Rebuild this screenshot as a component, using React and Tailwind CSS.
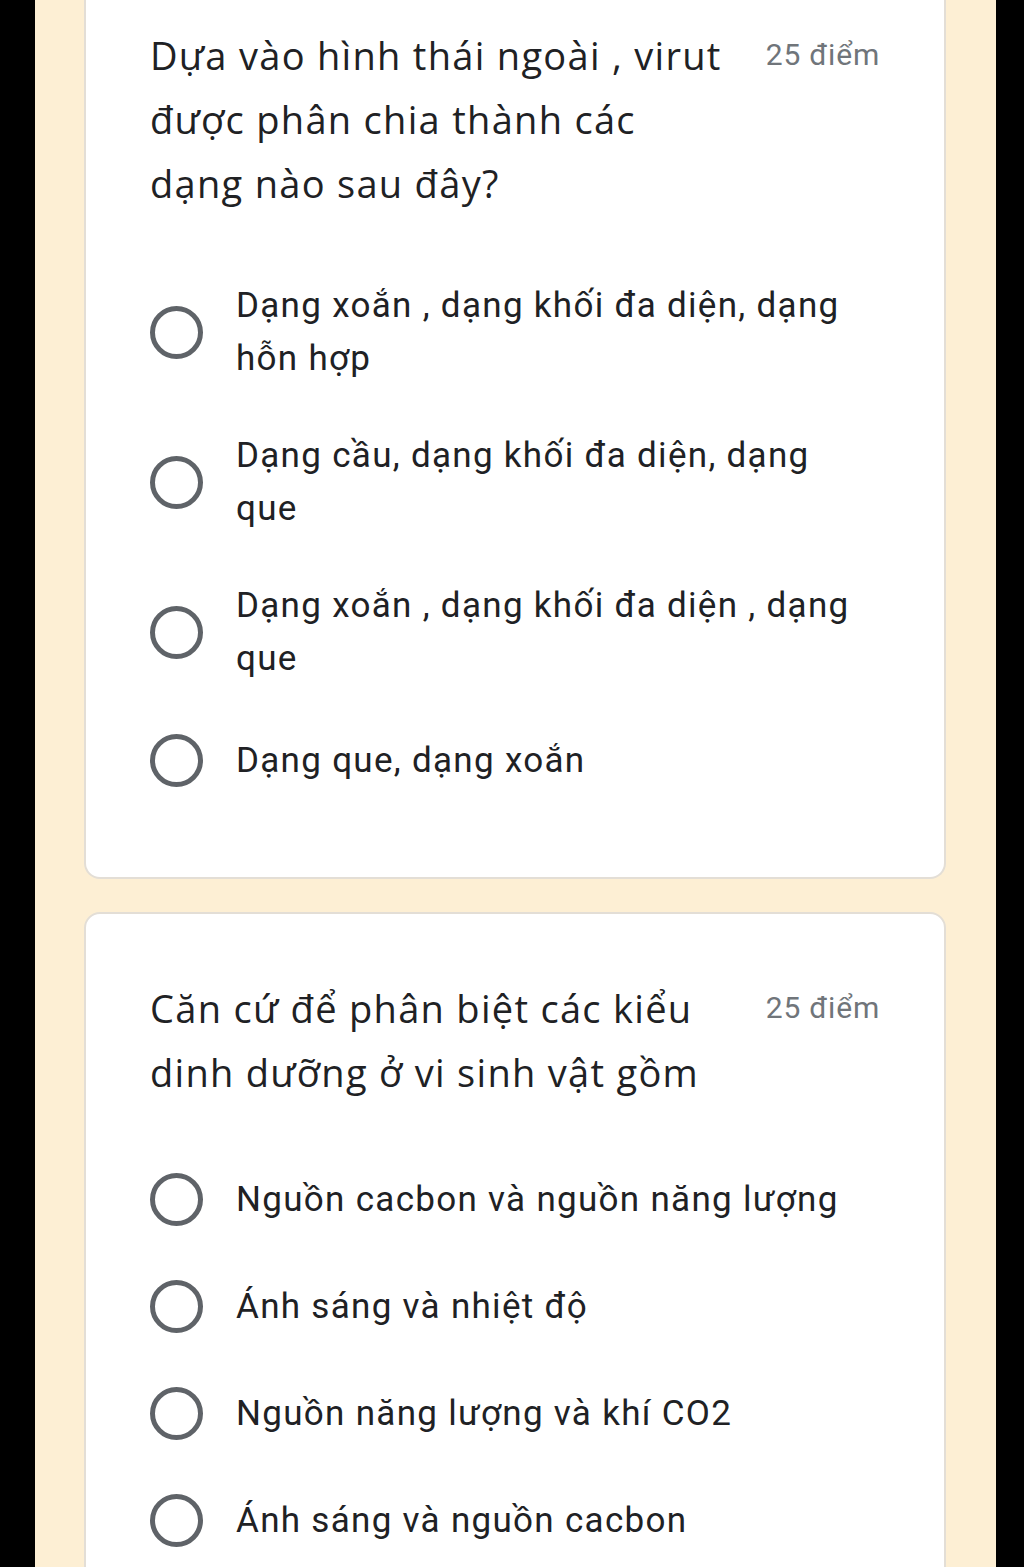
const questions = [
  {
    title: 'Dựa vào hình thái ngoài , virut được phân chia thành các dạng nào sau đây?',
    points: '25 điểm',
    options: [
      'Dạng xoắn , dạng khối đa diện, dạng hỗn hợp',
      'Dạng cầu, dạng khối đa diện, dạng que',
      'Dạng xoắn , dạng khối đa diện , dạng que',
      'Dạng que, dạng xoắn',
    ],
  },
  {
    title: 'Căn cứ để phân biệt các kiểu dinh dưỡng ở vi sinh vật gồm',
    points: '25 điểm',
    options: [
      'Nguồn cacbon và nguồn năng lượng',
      'Ánh sáng và nhiệt độ',
      'Nguồn năng lượng và khí CO2',
      'Ánh sáng và nguồn cacbon',
    ],
  },
];

function Radio() {
  return <span className="block w-[53px] h-[53px] shrink-0 rounded-full border-[5px] border-[#5f6368]" />;
}

function Question({ q, first }) {
  return (
    <div
      className={
        first
          ? 'bg-white border-2 border-t-0 border-[#e3ded6] rounded-b-2xl pt-[23px] pb-[63px] px-[64px]'
          : 'bg-white border-2 border-[#e3ded6] rounded-t-2xl pt-[62px] pb-[40px] px-[64px]'
      }
    >
      <div className="flex items-start justify-between gap-6">
        <h2
          className="w-[576px] text-[38px] leading-[64px] tracking-[1.3px] text-[#202124]"
          style={{ fontFamily: '"Open Sans", "Noto Sans", sans-serif' }}
        >
          {q.title}
        </h2>
        <span
          className="mt-[15px] text-[30px] leading-[34px] tracking-[0.8px] text-[#70757a] whitespace-nowrap"
          style={{ fontFamily: 'Roboto, sans-serif' }}
        >
          {q.points}
        </span>
      </div>
      <ul className="mt-[42px]">
        {q.options.map((o) => (
          <li key={o} className="flex items-center gap-[33px] min-h-[107px] py-[22px]">
            <Radio />
            <span
              className="w-[640px] text-[35px] leading-[53px] tracking-[1.3px] text-[#202124]"
              style={{ fontFamily: 'Roboto, sans-serif' }}
            >
              {o}
            </span>
          </li>
        ))}
      </ul>
    </div>
  );
}

export default function App() {
  return (
    <div className="flex h-[1567px] overflow-hidden bg-black">
      <div className="w-[35px] shrink-0 bg-black" />
      <div className="flex-1 bg-[#fdefd4] pl-[49px] pr-[50px] flex flex-col gap-[33px]">
        <Question q={questions[0]} first />
        <Question q={questions[1]} />
      </div>
      <div className="w-[28px] shrink-0 bg-black" />
    </div>
  );
}
